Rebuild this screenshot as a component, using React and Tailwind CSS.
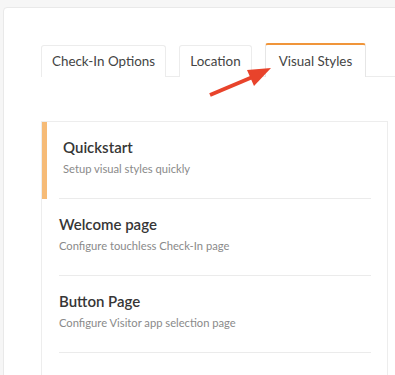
import React from 'react';

const tabs = [
  { label: 'Check-In Options', width: 'w-[125px]', active: false },
  { label: 'Location', width: 'w-[73px]', active: false },
  { label: 'Visual Styles', width: 'w-[101px]', active: true },
];

const items = [
  { title: 'Quickstart', desc: 'Setup visual styles quickly', active: true },
  { title: 'Welcome page', desc: 'Configure touchless Check-In page' },
  { title: 'Button Page', desc: 'Configure Visitor app selection page' },
];

export default function App() {
  return (
    <div
      className="relative h-[375px] w-[395px] overflow-hidden bg-[#f6f6f6] pl-[3px] pt-[7px]"
      style={{ fontFamily: 'Lato, "Open Sans", sans-serif' }}
    >
      <div className="h-[420px] w-[430px] rounded-tl-[4px] border border-[#e9e9e9] bg-white pl-[37px] pt-[35px]">
        {/* Tabs */}
        <div className="flex items-end gap-[13px] border-b border-[#ececec]">
          {tabs.map((t) => (
            <div
              key={t.label}
              className={`-mb-px flex items-center justify-center rounded-t-[3px] border border-b-0 text-[13.4px] text-[#444] ${t.width} ${
                t.active
                  ? 'h-[34px] border-t-2 border-[#e6e6e6] border-t-[#f0953a] bg-white'
                  : 'h-[32px] border-[#ececec] bg-white'
              }`}
            >
              {t.label}
            </div>
          ))}
        </div>

        {/* Card */}
        <div className="mt-[44px] w-[347px] border border-[#ededed] bg-white pb-10">
          {items.map((it) => (
            <div
              key={it.title}
              className={`border-l-[5px] pr-[16px] ${
                it.active ? 'border-l-[#f6bb77] pl-[12px]' : 'border-l-transparent -ml-[1px] pl-[13px]'
              }`}
            >
              <div className="border-b border-[#ebebeb] pb-[22px] pt-[15px]">
                <div className={it.active ? 'pl-1' : ''}>
                  <div className="text-[15px] font-semibold leading-[20px] text-[#363636]">
                    {it.title}
                  </div>
                  <div className="mt-[4px] text-[11.2px] leading-[15px] text-[#8a8a8a]">
                    {it.desc}
                  </div>
                </div>
              </div>
            </div>
          ))}
        </div>
      </div>

      {/* Annotation arrow */}
      <svg
        className="pointer-events-none absolute left-0 top-0"
        width="395"
        height="375"
        viewBox="0 0 395 375"
      >
        <line x1="210" y1="95" x2="255" y2="76" stroke="#e8432b" strokeWidth="4" />
        <polygon points="271,68 247,70 254,86" fill="#e8432b" />
      </svg>
    </div>
  );
}
